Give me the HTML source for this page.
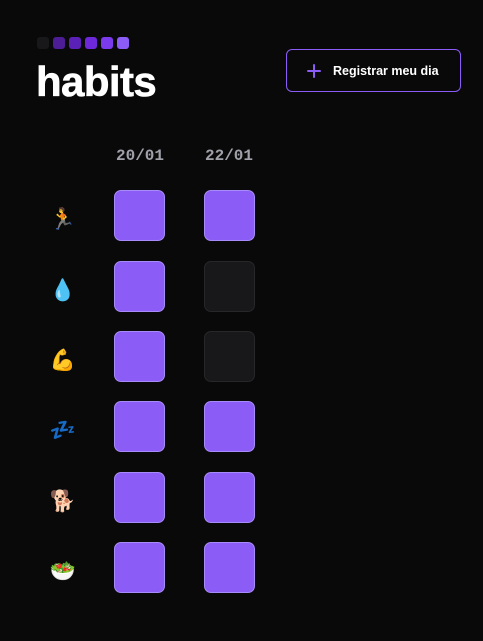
<!DOCTYPE html>
<html><head><meta charset="utf-8"><style>
html,body{margin:0;padding:0;background:#09090a;width:483px;height:641px;overflow:hidden;font-family:"Liberation Sans",sans-serif;}
.sq{position:absolute;width:12px;height:12px;border-radius:3px;top:37px}
.logo{position:absolute;left:36px;top:57px;color:#fff;font-weight:bold;font-size:42px;letter-spacing:-0.6px;line-height:50px;-webkit-text-stroke:0.6px #fff}
.btn{position:absolute;left:286px;top:49px;width:175px;height:43px;border:1px solid #8b5cf6;border-radius:6px;box-sizing:border-box}
.btn .t{position:absolute;left:46px;top:14px;color:#fff;font-weight:bold;font-size:12.5px}
.lab{position:absolute;top:147px;color:#a1a1aa;font-family:"Liberation Mono",monospace;font-weight:bold;font-size:16px}
.c{position:absolute;width:51px;height:51px;border-radius:7px;box-sizing:border-box}
.on{background:#8b5cf6;border:1px solid #a78bfa}
.off{background:#18181b;border:1px solid #27272a}
.e{position:absolute;left:49px;width:28px;text-align:center;font-size:21px;line-height:28px}
</style></head><body>
<div class="sq" style="left:37px;background:#18181b"></div>
<div class="sq" style="left:53px;background:#4c1d95"></div>
<div class="sq" style="left:69px;background:#5b21b6"></div>
<div class="sq" style="left:85px;background:#6d28d9"></div>
<div class="sq" style="left:101px;background:#7c3aed"></div>
<div class="sq" style="left:117px;background:#8b5cf6"></div>
<div class="logo">habits</div>
<div class="btn"><svg style="position:absolute;left:20px;top:14px" width="14" height="14" viewBox="0 0 14 14"><path d="M7 1V13M1 7H13" stroke="#8b5cf6" stroke-width="2" stroke-linecap="round"/></svg><span class="t">Registrar meu dia</span></div>
<div class="lab" style="left:116px">20/01</div>
<div class="lab" style="left:205px">22/01</div>

<div class="e" style="top:206px">🏃</div>
<div class="e" style="top:277px">💧</div>
<div class="e" style="top:347px">💪</div>
<div class="e" style="top:417px">💤</div>
<div class="e" style="top:488px">🐕</div>
<div class="e" style="top:558px">🥗</div>

<div class="c on" style="left:114px;top:190px"></div><div class="c on" style="left:204px;top:190px"></div>
<div class="c on" style="left:114px;top:261px"></div><div class="c off" style="left:204px;top:261px"></div>
<div class="c on" style="left:114px;top:331px"></div><div class="c off" style="left:204px;top:331px"></div>
<div class="c on" style="left:114px;top:401px"></div><div class="c on" style="left:204px;top:401px"></div>
<div class="c on" style="left:114px;top:472px"></div><div class="c on" style="left:204px;top:472px"></div>
<div class="c on" style="left:114px;top:542px"></div><div class="c on" style="left:204px;top:542px"></div>
</body></html>
